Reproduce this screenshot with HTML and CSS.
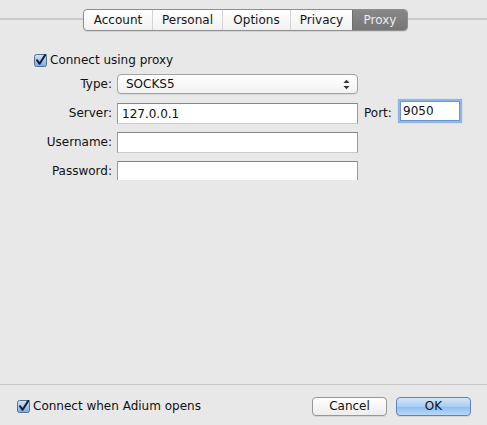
FILE: index.html
```html
<!DOCTYPE html>
<html>
<head>
<meta charset="utf-8">
<link rel="stylesheet" href="styles.css">
</head>
<body>
<div class="window">
  <div class="tabbar">
    <div class="tabs">
      <span class="tab t1">Account</span>
      <span class="tab t2">Personal</span>
      <span class="tab t3">Options</span>
      <span class="tab t4">Privacy</span>
      <span class="tab t5 active">Proxy</span>
    </div>
  </div>
  <div class="content">
    <label class="check proxy-check">
      <svg class="box" width="13" height="13" viewBox="0 0 13 13">
        <defs>
          <linearGradient id="g1" x1="0" y1="0" x2="0" y2="1">
            <stop offset="0" stop-color="#d6e4f5"/>
            <stop offset="0.5" stop-color="#a9c6ea"/>
            <stop offset="1" stop-color="#7fa9dc"/>
          </linearGradient>
        </defs>
        <rect x="0.5" y="0.5" width="12" height="12" rx="2" fill="url(#g1)" stroke="#51719b"/>
        <path d="M3 6.2 L5.6 9.8 L11.4 0.6" fill="none" stroke="#14213a" stroke-width="2" stroke-linecap="round" stroke-linejoin="round"/>
      </svg>
      <span>Connect using proxy</span>
    </label>
    <div class="form">
      <span class="lbl">Type:</span>
      <div class="select"><span>SOCKS5</span>
        <svg width="7" height="11" viewBox="0 0 7 11"><path d="M0.5 4 L3.5 0.8 L6.5 4 Z M0.5 7 L3.5 10.2 L6.5 7 Z" fill="#333"/></svg>
      </div>
      <span></span><span></span>

      <span class="lbl">Server:</span>
      <div class="input">127.0.0.1</div>
      <span class="lbl port-lbl">Port:</span>
      <div class="input port">9050</div>

      <span class="lbl">Username:</span>
      <div class="input"></div>
      <span></span><span></span>

      <span class="lbl">Password:</span>
      <div class="input pw"></div>
      <span></span><span></span>
    </div>
  </div>
  <div class="footer">
    <label class="check">
      <svg class="box" width="13" height="13" viewBox="0 0 13 13">
        <defs>
          <linearGradient id="g2" x1="0" y1="0" x2="0" y2="1">
            <stop offset="0" stop-color="#d6e4f5"/>
            <stop offset="0.5" stop-color="#a9c6ea"/>
            <stop offset="1" stop-color="#7fa9dc"/>
          </linearGradient>
        </defs>
        <rect x="0.5" y="0.5" width="12" height="12" rx="2" fill="url(#g2)" stroke="#51719b"/>
        <path d="M3 6.2 L5.6 9.8 L11.4 0.6" fill="none" stroke="#14213a" stroke-width="2" stroke-linecap="round" stroke-linejoin="round"/>
      </svg>
      <span>Connect when Adium opens</span>
    </label>
    <div class="buttons">
      <button class="btn">Cancel</button>
      <button class="btn ok">OK</button>
    </div>
  </div>
</div>
</body>
</html>
```
FILE: styles.css
```css
html, body {
  margin: 0;
  padding: 0;
}
body {
  background: #e8e8e8;
  font-family: "DejaVu Sans", "Liberation Sans", sans-serif;
  font-size: 12px;
  color: #111;
}
.window {
  width: 487px;
  height: 425px;
  display: flex;
  flex-direction: column;
}
.tabbar {
  height: 38px;
  padding: 9px 0 0 83px;
  box-sizing: border-box;
  display: flex;
  background: linear-gradient(#e8e8e8 0, #e8e8e8 18px, #c9c9c9 18px, #c9c9c9 20px, #e8e8e8 20px);
}
.tabs {
  display: flex;
  height: 20px;
  border: 1px solid #8e8e8e;
  border-radius: 4px;
  background: linear-gradient(#ffffff, #f1f1f1);
  box-shadow: 0 1px 0 rgba(0,0,0,0.08);
  overflow: hidden;
}
.tab {
  display: flex;
  align-items: center;
  justify-content: center;
  box-sizing: border-box;
  font-size: 12px;
  color: #151515;
  border-left: 1px solid #d4d4d4;
}
.t1 { width: 68px; border-left: none; }
.t2 { width: 70px; }
.t3 { width: 68px; }
.t4 { width: 62px; }
.t5 { width: 55px; }
.tab.active {
  background: linear-gradient(#888, #767676);
  color: #ececec;
  border-left: 1px solid #6e6e6e;
}
.content {
  flex: 1;
  padding-top: 15px;
}
.check {
  display: flex;
  align-items: center;
  gap: 3px;
  font-size: 12px;
}
.proxy-check {
  margin-left: 34px;
}
.form {
  display: grid;
  grid-template-columns: 112px 241px 32px 60px;
  column-gap: 5px;
  row-gap: 8px;
  margin-top: 7px;
  align-items: start;
  justify-content: start;
}
.lbl {
  text-align: right;
  font-size: 12px;
  line-height: 21px;
}
.port-lbl {
  text-align: left;
  margin-left: 1px;
}
.select {
  height: 20px;
  margin-bottom: 1px;
  box-sizing: border-box;
  border: 1px solid #a3a3a3;
  border-radius: 4px;
  background: linear-gradient(#ffffff, #f2f2f2);
  display: flex;
  align-items: center;
  justify-content: space-between;
  padding: 0 7px 0 8px;
  box-shadow: 0 1px 0 rgba(0,0,0,0.06);
}
.input {
  height: 21px;
  box-sizing: border-box;
  background: #fff;
  border: 1px solid #9b9b9b;
  border-top-color: #868686;
  border-bottom-color: #cbcbcb;
  display: flex;
  align-items: center;
  padding-left: 4px;
  font-size: 12px;
}
.input.pw {
  border-bottom: none;
  height: 19px;
}
.input.port {
  height: 20px;
  margin-top: -2px;
  padding-left: 2px;
  border: 1px solid #6f96c9;
  box-shadow: 0 0 1px 2px #8fb6e6;
}
.footer {
  height: 41px;
  border-top: 1px solid #c6c6c6;
  box-sizing: border-box;
  display: flex;
  align-items: center;
  justify-content: space-between;
  padding: 2px 16px 0 17px;
}
.buttons {
  display: flex;
  gap: 9px;
}
.btn {
  width: 75px;
  height: 19px;
  padding: 0;
  font-family: "DejaVu Sans", "Liberation Sans", sans-serif;
  font-size: 12px;
  color: #111;
  border: 1px solid #979797;
  border-radius: 4px;
  background: linear-gradient(#ffffff, #ededed);
  box-shadow: 0 1px 0 rgba(0,0,0,0.08);
}
.btn.ok {
  border-color: #5f83b8;
  background: linear-gradient(#d4e6f8 0%, #a9cdf2 50%, #8dbdef 51%, #b5d9fb 100%);
}
```
